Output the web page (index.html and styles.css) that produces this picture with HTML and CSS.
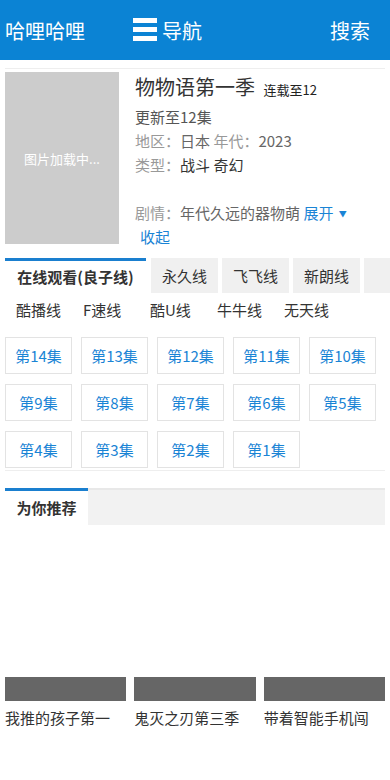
FILE: index.html
```html
<!DOCTYPE html>
<html lang="zh-CN">

<head>
    <meta charset="UTF-8">
    <meta name="viewport" content="width=device-width, initial-scale=1.0">
    <title>物物语第一季 - 哈哩哈哩</title>
    <link rel="stylesheet" href="styles.css">
</head>

<body>
    <!-- 顶部导航 -->
    <header class="top-bar">
        <a class="logo" href="#">哈哩哈哩</a>
        <a class="nav-link" href="#">
            <svg class="nav-icon" width="24" height="24" viewBox="0 0 24 24">
                <rect x="0" y="0" width="24" height="5" fill="#fff"></rect>
                <rect x="0" y="9" width="24" height="5" fill="#fff"></rect>
                <rect x="0" y="18" width="24" height="5" fill="#fff"></rect>
            </svg>
            导航
        </a>
        <a class="search-link" href="#">搜索</a>
    </header>

    <!-- 影片信息 -->
    <div class="detail">
        <div class="poster">图片加载中...</div>
        <div class="info">
            <h1 class="title">物物语第一季 <span class="status">连载至12</span></h1>
            <p class="line update">更新至12集</p>
            <p class="line"><span class="label">地区：</span><span class="val">日本</span> <span class="label">年代：</span><span class="val">2023</span></p>
            <p class="line"><span class="label">类型：</span><span class="val dark">战斗 奇幻</span></p>
            <p class="line"></p>
            <p class="line"><span class="label">剧情：</span><span class="val">年代久远的器物萌</span> <a class="blue" href="#">展开 <span class="caret">▼</span></a></p>
            <p class="line"><a class="blue fold" href="#">收起</a></p>
        </div>
    </div>

    <!-- 播放线路 -->
    <div class="source-tabs">
        <span class="tab active">在线观看(良子线)</span>
        <span class="tab">永久线</span>
        <span class="tab">飞飞线</span>
        <span class="tab">新朗线</span>
        <span class="tab stub"></span>
    </div>
    <div class="source-more">
        <span class="src">酷播线</span>
        <span class="src">F速线</span>
        <span class="src">酷U线</span>
        <span class="src">牛牛线</span>
        <span class="src">无天线</span>
    </div>

    <!-- 剧集列表 -->
    <div class="episodes">
        <a class="ep" href="#">第14集</a>
        <a class="ep" href="#">第13集</a>
        <a class="ep" href="#">第12集</a>
        <a class="ep" href="#">第11集</a>
        <a class="ep" href="#">第10集</a>
        <a class="ep" href="#">第9集</a>
        <a class="ep" href="#">第8集</a>
        <a class="ep" href="#">第7集</a>
        <a class="ep" href="#">第6集</a>
        <a class="ep" href="#">第5集</a>
        <a class="ep" href="#">第4集</a>
        <a class="ep" href="#">第3集</a>
        <a class="ep" href="#">第2集</a>
        <a class="ep" href="#">第1集</a>
    </div>

    <!-- 推荐 -->
    <div class="rec-bar">
        <span class="rec-tab">为你推荐</span>
    </div>
    <div class="rec-list">
        <a class="rec-item" href="#">
            <div class="rec-thumb"></div>
            <div class="rec-name">我推的孩子第一</div>
        </a>
        <a class="rec-item" href="#">
            <div class="rec-thumb"></div>
            <div class="rec-name">鬼灭之刃第三季</div>
        </a>
        <a class="rec-item" href="#">
            <div class="rec-thumb"></div>
            <div class="rec-name">带着智能手机闯</div>
        </a>
    </div>
</body>

</html>
```

FILE: styles.css
```css
/* ---- base ---- */

body {
    margin: 0;
    font-family: "Noto Sans CJK SC", "Noto Sans", sans-serif;
    font-size: 15px;
    color: #333;
    background-color: #fff;
}

a {
    text-decoration: none;
    color: inherit;
}

p,
h1 {
    margin: 0;
}

/* ---- header ---- */

.top-bar {
    height: 60px;
    background-color: #0b83d4;
    display: flex;
    align-items: center;
    padding: 0 20px 0 5px;
    color: #fff;
    font-size: 20px;
}

.nav-link {
    display: flex;
    align-items: center;
    margin-left: 48px;
}

.nav-icon {
    margin-right: 5px;
}

.search-link {
    margin-left: auto;
}

/* ---- detail ---- */

.detail {
    margin: 8px 5px 0;
    padding-top: 3px;
    border-top: 1px solid #eee;
    display: flex;
}

.poster {
    flex: 0 0 114px;
    height: 172px;
    background-color: #ccc;
    color: #fff;
    font-size: 13px;
    display: flex;
    align-items: center;
    justify-content: center;
}

.info {
    margin-left: 16px;
}

.title {
    font-size: 20px;
    font-weight: normal;
    line-height: 30px;
    color: #333;
}

.status {
    font-size: 13px;
    margin-left: 4px;
    color: #222;
}

.line {
    line-height: 24px;
    height: 24px;
    white-space: nowrap;
}

.update {
    color: #555;
}

.label {
    color: #999;
}

.val {
    color: #666;
}

.val.dark {
    color: #333;
}

.blue {
    color: #1a84d5;
}

.caret {
    font-size: 8px;
    vertical-align: 2px;
    margin-left: 2px;
}

.fold {
    margin-left: 5px;
}

/* ---- source tabs ---- */

.source-tabs {
    margin: 9px 0 0 5px;
    display: flex;
    height: 35px;
}

.tab {
    flex: 0 0 67px;
    background-color: #f0f0f0;
    margin-right: 4px;
    line-height: 35px;
    text-align: center;
    color: #333;
    white-space: nowrap;
}

.tab.active {
    flex-basis: 141px;
    background-color: #fff;
    border-top: 3px solid #1a7fcf;
    line-height: 32px;
    font-weight: bold;
    margin-right: 5px;
}

.tab.stub {
    flex: 1;
    margin-right: 0;
}

.source-more {
    margin-left: 5px;
    display: flex;
    height: 34px;
    line-height: 34px;
}

.src {
    flex: 0 0 67px;
    box-sizing: border-box;
    padding-left: 11px;
    white-space: nowrap;
}

/* ---- episodes ---- */

.episodes {
    margin: 10px 5px 0;
    padding-bottom: 2px;
    border-bottom: 1px solid #eee;
    display: grid;
    grid-template-columns: repeat(5, 67px);
    column-gap: 9px;
    row-gap: 10px;
}

.ep {
    height: 35px;
    line-height: 35px;
    border: 1px solid #e3e3e3;
    text-align: center;
    color: #1a84d5;
}

/* ---- recommend ---- */

.rec-bar {
    margin: 17px 5px 0;
    display: flex;
    height: 35px;
    background-color: #f2f2f2;
    border-top: 2px solid #e8e8e8;
}

.rec-tab {
    width: 83px;
    margin-top: -2px;
    background-color: #fff;
    border-top: 3px solid #1a7fcf;
    line-height: 34px;
    text-align: center;
    font-weight: bold;
}

.rec-list {
    margin: 152px 5px 0;
    display: grid;
    grid-template-columns: repeat(3, minmax(0, 1fr));
    column-gap: 8px;
}

.rec-thumb {
    height: 24px;
    background-color: #666;
}

.rec-name {
    margin-top: 5px;
    line-height: 24px;
    white-space: nowrap;
    overflow: hidden;
    color: #333;
}
```
